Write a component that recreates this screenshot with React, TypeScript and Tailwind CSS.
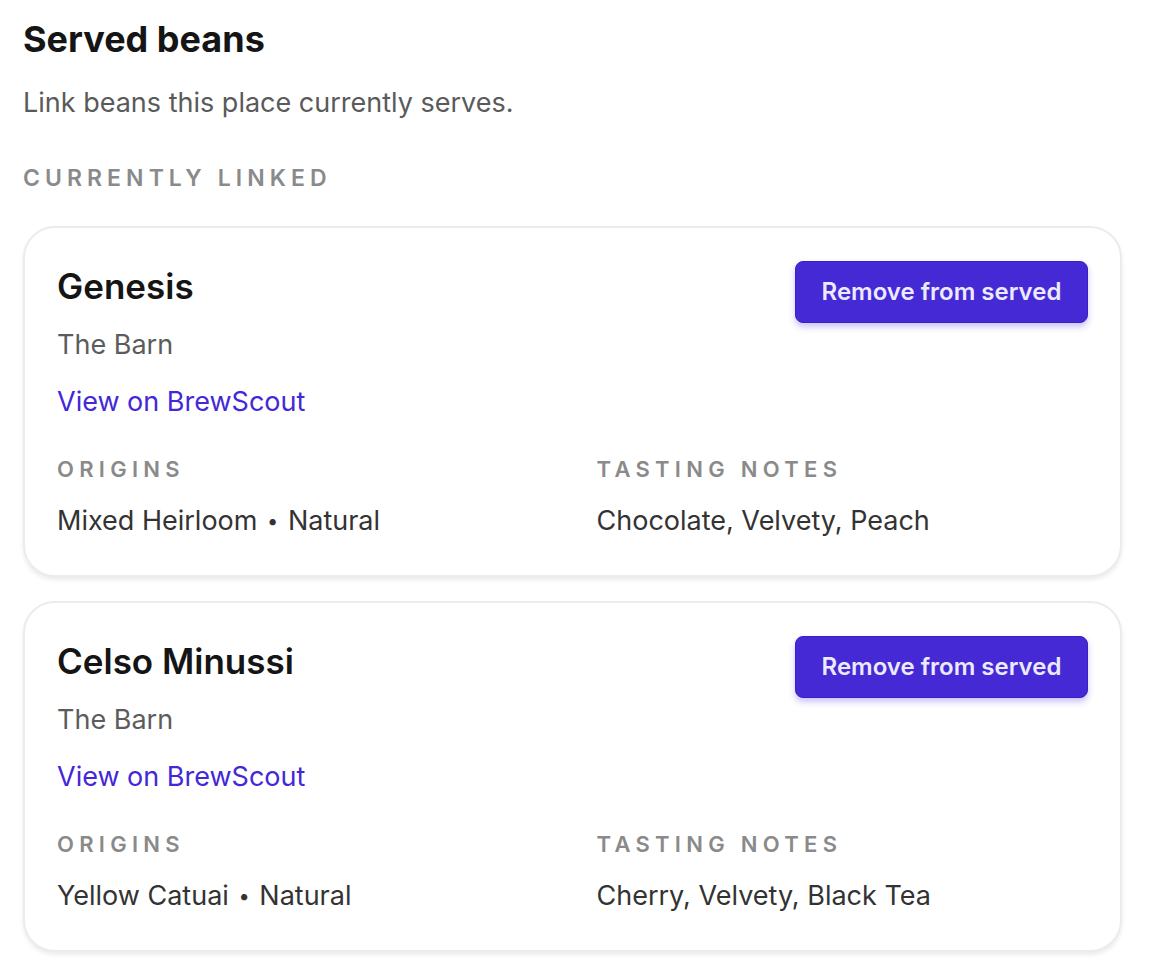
import React from "react";

type Bean = {
  name: string;
  roaster: string;
  origins: [string, string];
  notes: string;
};

const beans: Bean[] = [
  {
    name: "Genesis",
    roaster: "The Barn",
    origins: ["Mixed Heirloom", "Natural"],
    notes: "Chocolate, Velvety, Peach",
  },
  {
    name: "Celso Minussi",
    roaster: "The Barn",
    origins: ["Yellow Catuai", "Natural"],
    notes: "Cherry, Velvety, Black Tea",
  },
];

function BeanCard({ bean }: { bean: Bean }) {
  return (
    <div className="rounded-[32px] border-2 border-[#ececec] bg-white px-8 pt-8 pb-[34px] shadow-[0_3px_4px_rgba(0,0,0,0.08)]">
      <div className="flex items-start justify-between">
        <div className="flex flex-col">
          <h3 className="text-[35px] leading-[52px] font-semibold text-[#151515]">{bean.name}</h3>
          <p className="mt-[13px] text-[27px] leading-[40px] text-[#5c5c5c]">{bean.roaster}</p>
          <a href="#" className="mt-[17px] text-[27px] leading-[40px] text-[#4327d8]">
            View on BrewScout
          </a>
        </div>
        <button className="mt-px h-[62px] w-[293px] rounded-lg border border-[#3a20c4] bg-[#4429d4] text-[24px] font-semibold text-[#ebeaff] shadow-[0_4px_6px_rgba(79,60,230,0.3)]">
          Remove from served
        </button>
      </div>
      <div className="mt-[31px] grid grid-cols-2 gap-12">
        <div>
          <div className="text-[22px] leading-[32px] font-semibold tracking-[0.24em] text-[#8a8a8a]">ORIGINS</div>
          <div className="mt-[16px] text-[27px] leading-[40px] text-[#333]">
            {bean.origins[0]} <span className="mx-[2px] text-[20px] align-[2px]">•</span> {bean.origins[1]}
          </div>
        </div>
        <div>
          <div className="text-[22px] leading-[32px] font-semibold tracking-[0.24em] text-[#8a8a8a]">TASTING NOTES</div>
          <div className="mt-[16px] text-[27px] leading-[40px] text-[#333]">{bean.notes}</div>
        </div>
      </div>
    </div>
  );
}

export default function App() {
  return (
    <div className="min-h-screen bg-white pt-[16px] pl-[23px] pr-[30px] font-['Inter',sans-serif]">
      <h1 className="text-[36px] leading-[46px] font-bold text-[#151515]">Served beans</h1>
      <p className="mt-[21px] text-[27px] leading-[40px] text-[#5a5a5a]">
        Link beans this place currently serves.
      </p>
      <h2 className="mt-[39px] text-[23px] leading-[32px] font-semibold tracking-[0.22em] text-[#8a8a8a]">
        CURRENTLY LINKED
      </h2>
      <div className="mt-[32px] flex flex-col gap-6">
        {beans.map((b) => (
          <BeanCard key={b.name} bean={b} />
        ))}
      </div>
    </div>
  );
}
